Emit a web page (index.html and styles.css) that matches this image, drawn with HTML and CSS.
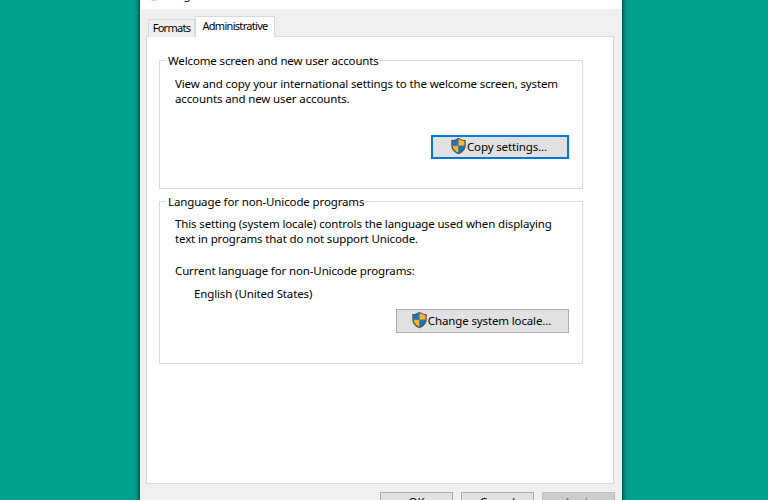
FILE: index.html
```html
<!DOCTYPE html>
<html lang="en">
<head>
<meta charset="utf-8">
<title>Region</title>
<link rel="stylesheet" href="styles.css">
</head>
<body>
<div class="window">
  <div class="titlebar">
    <svg class="app-icon" width="16" height="16" viewBox="0 0 16 16"><circle cx="8" cy="8" r="7" fill="#c8c8c8"/></svg>
    <span class="title">Region</span>
  </div>
  <div class="client">
    <div class="tabs">
      <div class="tab">Formats</div>
      <div class="tab active">Administrative</div>
    </div>
    <div class="panel">
      <fieldset class="group first">
        <legend class="legend">Welcome screen and new user accounts</legend>
        <p class="text">View and copy your international settings to the welcome screen, system<br>accounts and new user accounts.</p>
        <div class="actions copy-actions">
          <button class="btn focused wide-copy" type="button">
            <svg class="shield" width="17" height="18" viewBox="0 0 16 17"><path d="M8 .6C6 2 4 2.7 1.2 2.9V8c0 3.6 2.6 6.5 6.8 8.4 4.2-1.9 6.8-4.8 6.8-8.4V2.9C12 2.7 10 2 8 .6z" fill="#4a5560"/><path d="M8 2C6.300 3.100 4.500 3.700 2.400 3.900V8.300H8z" fill="#1f73c4"/><path d="M8 2c1.700 1.100 3.500 1.700 5.600 1.900V8.300H8z" fill="#fbb822"/><path d="M2.400 8.300H8V15C4.800 13.400 2.700 11.200 2.400 8.300z" fill="#fbb822"/><path d="M13.600 8.300H8V15c3.200-1.600 5.300-3.800 5.600-6.700z" fill="#1f73c4"/></svg>
            <span>Copy settings...</span>
          </button>
        </div>
      </fieldset>
      <fieldset class="group second">
        <legend class="legend">Language for non-Unicode programs</legend>
        <p class="text">This setting (system locale) controls the language used when displaying<br>text in programs that do not support Unicode.</p>
        <p class="text current">Current language for non-Unicode programs:</p>
        <p class="text locale">English (United States)</p>
        <div class="actions locale-actions">
          <button class="btn wide-locale" type="button">
            <svg class="shield" width="17" height="18" viewBox="0 0 16 17"><path d="M8 .6C6 2 4 2.7 1.2 2.9V8c0 3.6 2.6 6.5 6.8 8.4 4.2-1.9 6.8-4.8 6.8-8.4V2.9C12 2.7 10 2 8 .6z" fill="#4a5560"/><path d="M8 2C6.300 3.100 4.500 3.700 2.400 3.900V8.300H8z" fill="#1f73c4"/><path d="M8 2c1.700 1.100 3.500 1.700 5.600 1.900V8.300H8z" fill="#fbb822"/><path d="M2.400 8.300H8V15C4.800 13.400 2.700 11.200 2.400 8.300z" fill="#fbb822"/><path d="M13.600 8.300H8V15c3.200-1.600 5.300-3.800 5.600-6.700z" fill="#1f73c4"/></svg>
            <span>Change system locale...</span>
          </button>
        </div>
      </fieldset>
    </div>
    <div class="footer">
      <button class="btn footer-btn" type="button">OK</button>
      <button class="btn footer-btn" type="button">Cancel</button>
      <button class="btn footer-btn disabled" type="button">Apply</button>
    </div>
  </div>
</div>
</body>
</html>
```

FILE: styles.css
```css
html, body {
  margin: 0;
  height: 500px;
  overflow: hidden;
}
body {
  background: #009f8e;
  font-family: "Noto Sans", "Open Sans", sans-serif;
  font-size: 11.500px;
  letter-spacing: -0.13px;
  color: #000;
}
.window {
  width: 482px;
  height: 540px;
  margin: -22px 0 0 140px;
  background: #f0f0f0;
  box-shadow: 0 0 4px 1px rgba(0, 0, 0, 0.65);
}
.titlebar {
  height: 31px;
  box-sizing: border-box;
  background: #fff;
  display: flex;
  align-items: flex-start;
  gap: 8px;
  padding: 8px 0 0 6px;
  line-height: 18px;
}
.client {
  padding: 7px 8px 0 6px;
}
.tabs {
  display: flex;
  align-items: flex-end;
  height: 21px;
  padding-left: 2px;
  margin-bottom: -1px;
  position: relative;
  z-index: 1;
}
.tab {
  box-sizing: border-box;
  height: 18px;
  width: 47px;
  line-height: 16px;
  border: 1px solid #d9d9d9;
  border-bottom: 0;
  background: #f0f0f0;
  text-align: center;
  font-size: 11px;
  letter-spacing: -0.7px;
}
.tab.active {
  height: 21px;
  width: 80px;
  line-height: 17px;
  background: #fff;
  border-color: #d9d9d9;
}
.panel {
  box-sizing: border-box;
  height: 448px;
  background: #fff;
  border: 1px solid #d9d9d9;
  padding: 14px 30px 0 12px;
}
.group {
  margin: 0;
  padding: 0;
  min-width: 0;
  border: 1px solid #dcdcdc;
}
.group.second {
  margin-top: 3px;
}
.legend {
  margin-left: 6px;
  padding: 2px 1px 0 2px;
  line-height: 16px;
  white-space: nowrap;
}
.text {
  margin: 0 0 0 15px;
  line-height: 15px;
  white-space: nowrap;
}
.first .text {
  margin-top: 7px;
}
.second .text:first-of-type {
  margin-top: 6px;
}
.second .text.current {
  margin-top: 17px;
}
.second .text.locale {
  margin: 8px 0 0 34px;
}
.actions {
  display: flex;
  justify-content: flex-end;
  padding-right: 13px;
}
.copy-actions {
  margin: 29px 0;
}
.locale-actions {
  margin: 8px 0 30px;
}
.btn {
  box-sizing: border-box;
  height: 24px;
  margin: 0;
  padding: 0 3px 2px 0;
  display: flex;
  align-items: center;
  justify-content: center;
  background: #e1e1e1;
  border: 1px solid #adadad;
  border-radius: 0;
  font: inherit;
  letter-spacing: inherit;
  color: #000;
  white-space: nowrap;
}
.btn.focused {
  border: 2px solid #0078d7;
}
.wide-copy {
  width: 138px;
}
.wide-locale {
  width: 173px;
}
.footer {
  display: flex;
  justify-content: flex-end;
  gap: 8px;
  margin: 8px -1px 0 0;
}
.footer-btn {
  width: 73px;
  height: 23px;
  padding: 0 0 4px;
}
.footer-btn.disabled {
  background: #cccccc;
  border-color: #bfbfbf;
  color: #7a7a7a;
}
```
